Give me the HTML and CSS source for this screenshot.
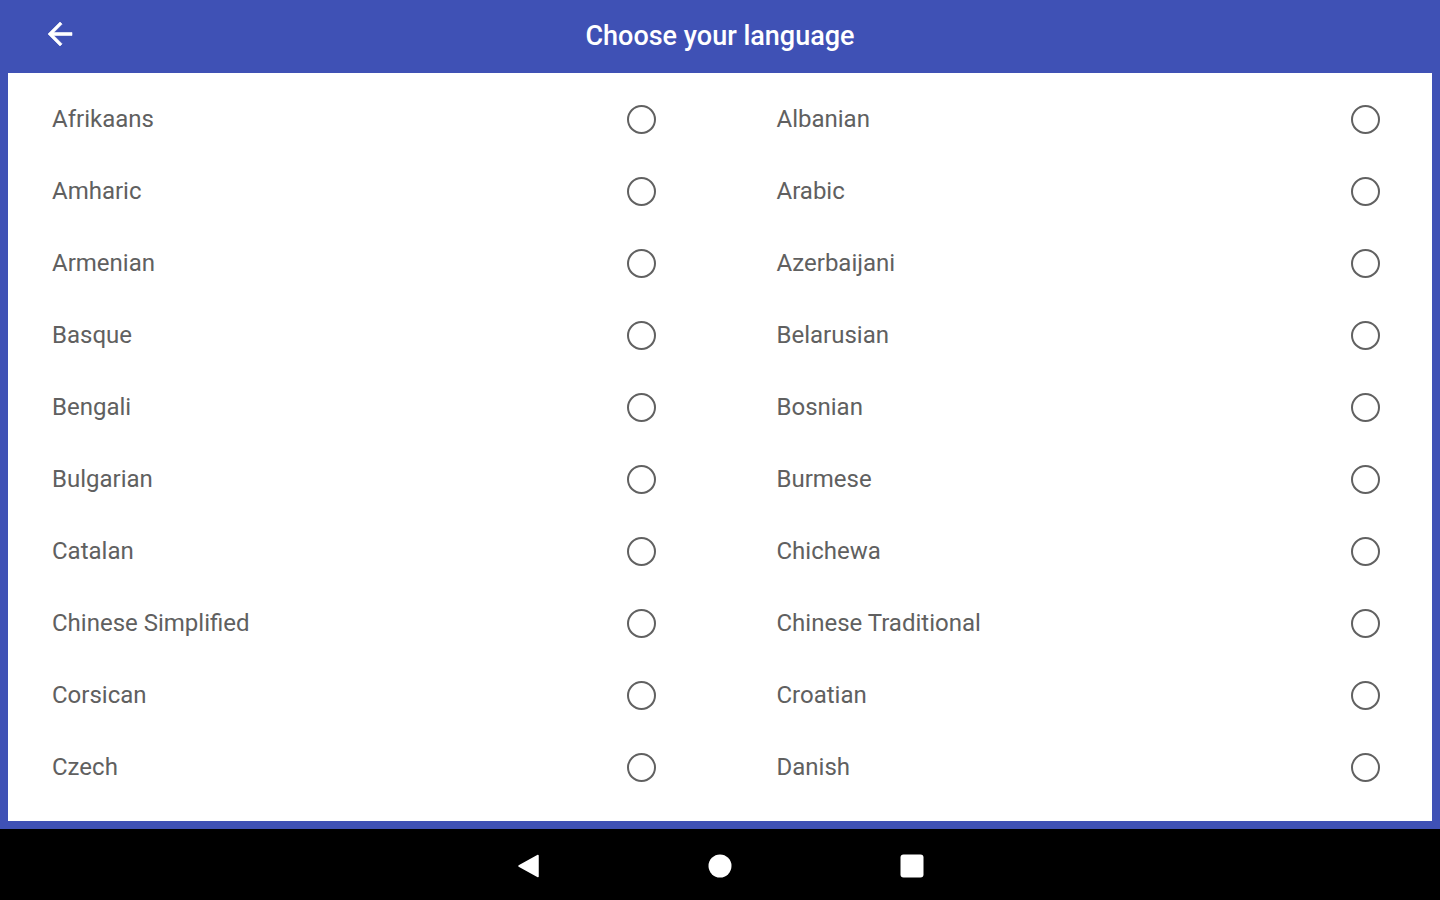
FILE: index.html
```html
<!DOCTYPE html>
<html lang="en">
<head>
<meta charset="utf-8">
<title>Choose your language</title>
<link rel="stylesheet" href="styles.css">
</head>
<body>
<div class="app">
  <header class="topbar">
    <button class="back" aria-label="Back">
      <svg width="36" height="36" viewBox="0 0 24 24"><path d="M20 11H7.83l5.59-5.59L12 4l-8 8 8 8 1.41-1.41L7.83 13H20v-2z" fill="#fff" stroke="#fff" stroke-width="0.4"/></svg>
    </button>
    <h1 class="title">Choose your language</h1>
  </header>
  <main class="panel">
    <ul class="list">
      <li class="row"><span class="name">Afrikaans</span><span class="radio"></span></li>
      <li class="row"><span class="name">Albanian</span><span class="radio"></span></li>
      <li class="row"><span class="name">Amharic</span><span class="radio"></span></li>
      <li class="row"><span class="name">Arabic</span><span class="radio"></span></li>
      <li class="row"><span class="name">Armenian</span><span class="radio"></span></li>
      <li class="row"><span class="name">Azerbaijani</span><span class="radio"></span></li>
      <li class="row"><span class="name">Basque</span><span class="radio"></span></li>
      <li class="row"><span class="name">Belarusian</span><span class="radio"></span></li>
      <li class="row"><span class="name">Bengali</span><span class="radio"></span></li>
      <li class="row"><span class="name">Bosnian</span><span class="radio"></span></li>
      <li class="row"><span class="name">Bulgarian</span><span class="radio"></span></li>
      <li class="row"><span class="name">Burmese</span><span class="radio"></span></li>
      <li class="row"><span class="name">Catalan</span><span class="radio"></span></li>
      <li class="row"><span class="name">Chichewa</span><span class="radio"></span></li>
      <li class="row"><span class="name">Chinese Simplified</span><span class="radio"></span></li>
      <li class="row"><span class="name">Chinese Traditional</span><span class="radio"></span></li>
      <li class="row"><span class="name">Corsican</span><span class="radio"></span></li>
      <li class="row"><span class="name">Croatian</span><span class="radio"></span></li>
      <li class="row"><span class="name">Czech</span><span class="radio"></span></li>
      <li class="row"><span class="name">Danish</span><span class="radio"></span></li>
    </ul>
  </main>
  <nav class="navbar">
    <svg class="nav-icon" width="24" height="24" viewBox="0 0 24 24"><path d="M22 1.5V22.5L3 12Z" fill="#fff" stroke="#fff" stroke-width="1.5" stroke-linejoin="round"/></svg>
    <svg class="nav-icon" width="24" height="24" viewBox="0 0 24 24"><circle cx="12" cy="12" r="11.5" fill="#fff"/></svg>
    <svg class="nav-icon" width="24" height="24" viewBox="0 0 24 24"><rect x="0.5" y="0.5" width="23" height="23" rx="3" fill="#fff"/></svg>
  </nav>
</div>
</body>
</html>
```

FILE: styles.css
```css
* { box-sizing: border-box; }
html, body { margin: 0; padding: 0; }
body {
  width: 1440px;
  height: 900px;
  overflow: hidden;
  font-family: Roboto, "Noto Sans", Arial, sans-serif;
  background: #3f51b5;
}
.app {
  display: flex;
  flex-direction: column;
  height: 900px;
}
.topbar {
  height: 73px;
  flex: 0 0 73px;
  background: #3f51b5;
  display: flex;
  align-items: center;
  position: relative;
  padding-bottom: 6px;
}
.back {
  background: none;
  border: 0;
  padding: 0;
  margin-left: 42px;
  width: 36px;
  height: 36px;
  display: flex;
  align-items: center;
  justify-content: center;
  cursor: pointer;
}
.title {
  position: absolute;
  left: 0;
  right: 0;
  top: 0;
  bottom: 0;
  margin: 0;
  display: flex;
  align-items: center;
  justify-content: center;
  padding-bottom: 2px;
  color: #fff;
  font-size: 27px;
  font-weight: 500;
  pointer-events: none;
}
.panel {
  flex: 0 0 748px;
  margin: 0 8px;
  background: #fff;
  padding: 10px 52px 0 44px;
}
.list {
  list-style: none;
  margin: 0;
  padding: 0;
  display: grid;
  grid-template-columns: 1fr 1fr;
  column-gap: 121px;
}
.row {
  height: 72px;
  display: flex;
  align-items: center;
  justify-content: space-between;
}
.name {
  font-size: 24px;
  color: #606060;
}
.radio {
  width: 29px;
  height: 29px;
  border: 2.5px solid #616161;
  border-radius: 50%;
}
.navbar {
  margin-top: 8px;
  flex: 1 1 auto;
  background: #000;
  display: flex;
  align-items: center;
  justify-content: center;
  gap: 168px;
  padding-top: 2px;
}
.nav-icon { display: block; }
```
